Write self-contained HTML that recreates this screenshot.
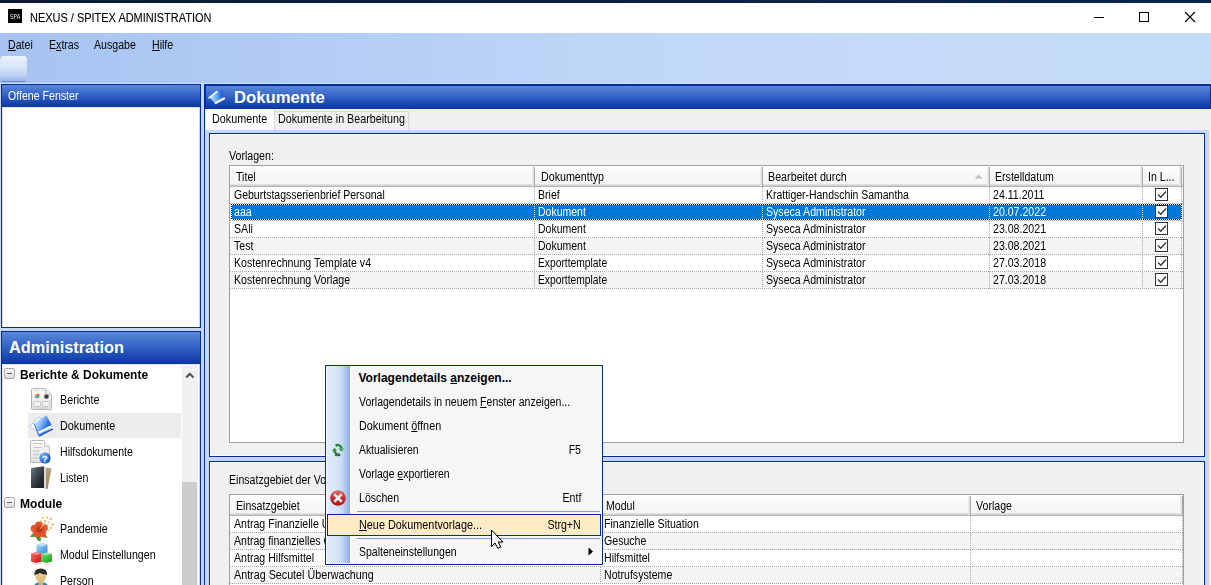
<!DOCTYPE html>
<html><head><meta charset="utf-8"><style>
*{box-sizing:border-box;margin:0;padding:0}
html,body{width:1211px;height:585px;overflow:hidden}
body{position:relative;background:#c4d8f6;font-family:"Liberation Sans",sans-serif;font-size:12px;color:#000}
.a{position:absolute}
.t{position:absolute;white-space:nowrap;line-height:13px;transform:scaleX(0.883);transform-origin:0 0}
.r{transform-origin:100% 0}
.n{transform:none}
.w{color:#fff}
.b{font-weight:bold}
.u{text-decoration:underline}
#topline{left:0;top:0;width:1211px;height:3px;background:linear-gradient(to right,#0c1b33,#0a2550)}
#titlebar{left:0;top:3px;width:1211px;height:30px;background:#fff}
#menubar{left:0;top:33px;width:1211px;height:51px;background:linear-gradient(to right,#a6c3f1 0%,#b7d0f5 35%,#c3d9f7 60%,#c4dbf7 100%)}
.hdr{background:linear-gradient(to bottom,#5a88d9 0%,#3363c6 45%,#0b35a2 100%)}
.bd{background:#062c97}
.tbl{background:#fff;border:1px solid #a0a0a0}
.th{background:linear-gradient(to bottom,#ffffff 0px,#f8f8f8 8px,#f6f6f6 18px,#e0e0e0 18px,#e0e0e0 19px,#d0d0d0 19px,#d0d0d0 20px,#b5b5b5 20px,#b5b5b5 21px)}
.sep{background:linear-gradient(to right,#eeeeee 0%,#dedede 60%,#a8a8a8 67%,#a8a8a8 100%);width:3px;border-right:0}
.row{height:17px}
.alt{background:#f5f5f5}
.sel{background:#0078d7}
.vd{border-left:1px dotted #a8a8a8}
.hd{border-bottom:1px dotted #a8a8a8}
.chk{width:13px;height:13px;border:1px solid #333;background:#fff}
</style></head><body>
<div class="a" id="topline"></div><div class="a" id="titlebar"></div><div class="a" id="menubar"></div>
<div class="a" style="left:0;top:83px;width:1211px;height:1px;background:#cfe2fb"></div>
<div class="a" style="left:8px;top:9px;width:14px;height:14px;background:#000"></div>
<div class="t w" style="left:9.8px;top:12.6px;font-size:6.8px;line-height:7px;transform:scaleX(0.78);color:#f4f4f4">SPA</div>
<div class="t " style="left:29.5px;top:12.4px;font-size:12px;transform:scaleX(0.914);color:#000;-webkit-text-stroke-width:0.1px">NEXUS / SPITEX ADMINISTRATION</div>
<div class="a" style="left:1094px;top:17px;width:10px;height:1px;background:#000"></div>
<div class="a" style="left:1139px;top:12px;width:10px;height:10px;border:1px solid #000"></div>
<svg class="a" style="left:1184px;top:11px" width="12" height="12" viewBox="0 0 12 12"><path d="M1 1L11 11M11 1L1 11" stroke="#000" stroke-width="1.1"/></svg>
<div class="t " style="left:8px;top:39.0px;"><u>D</u>atei</div>
<div class="t " style="left:49px;top:39.0px;">E<u>x</u>tras</div>
<div class="t " style="left:94px;top:39.0px;">Ausgabe</div>
<div class="t " style="left:152px;top:39.0px;"><u>H</u>ilfe</div>
<svg class="a" style="left:0px;top:55px" width="28" height="28" viewBox="0 0 28 28"><defs><linearGradient id="tb" x1="0" y1="0" x2="0" y2="1"><stop offset="0" stop-color="#eaf2fd"/><stop offset="0.45" stop-color="#d6e4f8"/><stop offset="0.8" stop-color="#b4cbef"/><stop offset="1" stop-color="#93b1e2"/></linearGradient></defs><path d="M0 4L2 1H25L27 3V25L25 27H0Z" fill="url(#tb)"/><path d="M2 26.5H25" stroke="#6584c0" stroke-width="1"/></svg>
<div class="a bd" style="left:1px;top:84px;width:200px;height:244px"></div>
<div class="a hdr" style="left:2px;top:85px;width:198px;height:22px"></div>
<div class="a" style="left:2px;top:107px;width:198px;height:220px;background:#fff;border:1px solid #e4e1dc;border-right-color:#d4d4d4;border-bottom:none"></div>
<div class="t w" style="left:7.5px;top:90.4px;">Offene Fenster</div>
<div class="a bd" style="left:1px;top:331px;width:200px;height:254px"></div>
<div class="a hdr" style="left:2px;top:332px;width:198px;height:32px"></div>
<div class="a" style="left:2px;top:364px;width:198px;height:221px;background:#fff;border:1px solid #e4e1dc;border-right-color:#d4d4d4;border-bottom:none"></div>
<div class="t w b n" style="left:9px;top:337px;font-size:16.3px;line-height:20px;letter-spacing:0">Administration</div>
<div class="a" style="left:182px;top:366px;width:16px;height:219px;background:#f0f0f0"></div>
<div class="a" style="left:182px;top:482px;width:15px;height:103px;background:#cdcdcd"></div>
<svg class="a" style="left:185px;top:371px" width="10" height="8" viewBox="0 0 10 8"><path d="M1.2 6.5L4.8 2.8L8.4 6.5" stroke="#505050" stroke-width="2" fill="none"/></svg>
<div class="a" style="left:28px;top:413px;width:153px;height:25px;background:#ececec"></div>
<div class="a" style="left:4px;top:368px;width:11px;height:11px;border:1px solid #a8a8a8;border-radius:2px;background:linear-gradient(to bottom,#fdfdfd,#dcdcdc)"></div>
<div class="a" style="left:7px;top:373px;width:5px;height:1px;background:#606060"></div>
<div class="t b" style="left:19.5px;top:369.0px;font-size:12.5px;transform:scaleX(0.955)">Berichte &amp; Dokumente</div>
<div class="a" style="left:4px;top:497px;width:11px;height:11px;border:1px solid #a8a8a8;border-radius:2px;background:linear-gradient(to bottom,#fdfdfd,#dcdcdc)"></div>
<div class="a" style="left:7px;top:502px;width:5px;height:1px;background:#606060"></div>
<div class="t b" style="left:20px;top:498.0px;font-size:12.5px;transform:scaleX(0.965)">Module</div>
<div class="t " style="left:60px;top:394.4px;transform:scaleX(0.895);">Berichte</div>
<div class="t " style="left:60px;top:420.4px;transform:scaleX(0.900);">Dokumente</div>
<div class="t " style="left:60px;top:446.4px;transform:scaleX(0.881);">Hilfsdokumente</div>
<div class="t " style="left:60px;top:472.4px;">Listen</div>
<div class="t " style="left:60px;top:523.4px;transform:scaleX(0.881);">Pandemie</div>
<div class="t " style="left:60px;top:549.4px;transform:scaleX(0.884);">Modul Einstellungen</div>
<div class="t " style="left:60px;top:575.4px;">Person</div>
<div class="a bd" style="left:204px;top:84px;width:1007px;height:501px"></div>
<div class="a hdr" style="left:206px;top:86px;width:1004px;height:23px"></div>
<div class="a" style="left:205px;top:109px;width:1006px;height:476px;background:#f0f0f0"></div>
<div class="a" style="left:205px;top:130px;width:1004px;height:455px;background:#c4d8f6;border-left:1px solid #dcdcdc;border-right:1px solid #d4d4d4"></div>
<div class="t w b n" style="left:234px;top:88px;font-size:16.7px;line-height:20px;letter-spacing:0">Dokumente</div>
<div class="a" style="left:205px;top:109px;width:70px;height:21px;background:#fff;border-right:1px solid #d9d9d9;border-left:1px solid #e8e8e8"></div>
<div class="a" style="left:274px;top:111px;width:135px;height:19px;background:#f0f0f0;border:1px solid #d9d9d9;border-bottom:none"></div>
<div class="t " style="left:212px;top:113.4px;transform:scaleX(0.900);">Dokumente</div>
<div class="t " style="left:277.5px;top:113.4px;transform:scaleX(0.893);">Dokumente in Bearbeitung</div>
<div class="a bd" style="left:209px;top:133px;width:996px;height:324px"></div>
<div class="a" style="left:210px;top:134px;width:994px;height:322px;background:#f0f0f0;border:1px solid #fbfbfb"></div>
<div class="t " style="left:229px;top:150.4px;transform:scaleX(0.884);">Vorlagen:</div>
<div class="a tbl" style="left:229px;top:165px;width:955px;height:278px"></div>
<div class="a th" style="left:230px;top:166px;width:953px;height:21px"></div>
<div class="a sep" style="left:532px;top:167px;height:19px"></div>
<div class="a sep" style="left:760px;top:167px;height:19px"></div>
<div class="a sep" style="left:987px;top:167px;height:19px"></div>
<div class="a sep" style="left:1140px;top:167px;height:19px"></div>
<div class="a sep" style="left:1179px;top:167px;height:19px"></div>
<div class="t " style="left:235.5px;top:171.0px;">Titel</div>
<div class="t " style="left:540.5px;top:171.0px;transform:scaleX(0.891);">Dokumenttyp</div>
<div class="t " style="left:768px;top:171.0px;transform:scaleX(0.894);">Bearbeitet durch</div>
<div class="t " style="left:994.5px;top:171.0px;">Erstelldatum</div>
<div class="t " style="left:1148px;top:171.0px;">In L...</div>
<svg class="a" style="left:974px;top:173px" width="9" height="6" viewBox="0 0 9 6"><path d="M0.5 5.5L4.5 1.5L8.5 5.5Z" fill="#c0c0c0"/></svg>
<div class="a row hd " style="left:230px;top:187px;width:953px"></div>
<div class="a vd" style="left:534px;top:187px;height:17px;"></div>
<div class="a vd" style="left:762px;top:187px;height:17px;"></div>
<div class="a vd" style="left:989px;top:187px;height:17px;"></div>
<div class="a vd" style="left:1142px;top:187px;height:17px;"></div>
<div class="a vd" style="left:1181px;top:187px;height:17px;"></div>
<div class="t " style="left:234px;top:189.4px;transform:scaleX(0.876);">Geburtstagsserienbrief Personal</div>
<div class="t " style="left:538px;top:189.4px;">Brief</div>
<div class="t " style="left:766px;top:189.4px;transform:scaleX(0.871);">Krattiger-Handschin Samantha</div>
<div class="t " style="left:993px;top:189.4px;">24.11.2011</div>
<div class="a chk" style="left:1155px;top:188px"></div>
<svg class="a" style="left:1157px;top:190px" width="10" height="9" viewBox="0 0 10 9"><path d="M1 4.5L3.8 7.2L9 1.5" stroke="#333" stroke-width="1.3" fill="none"/></svg>
<div class="a row hd alt" style="left:230px;top:204px;width:953px"></div>
<div class="a sel" style="left:231px;top:204px;width:951px;height:16px"></div>
<div class="a vd" style="left:534px;top:204px;height:17px;border-left-color:#d8e8f8"></div>
<div class="a vd" style="left:762px;top:204px;height:17px;border-left-color:#d8e8f8"></div>
<div class="a vd" style="left:989px;top:204px;height:17px;border-left-color:#d8e8f8"></div>
<div class="a vd" style="left:1142px;top:204px;height:17px;border-left-color:#d8e8f8"></div>
<div class="a vd" style="left:1181px;top:204px;height:17px;border-left-color:#d8e8f8"></div>
<div class="t w" style="left:234px;top:206.4px;">aaa</div>
<div class="t w" style="left:538px;top:206.4px;transform:scaleX(0.874);">Dokument</div>
<div class="t w" style="left:766px;top:206.4px;">Syseca Administrator</div>
<div class="t w" style="left:993px;top:206.4px;">20.07.2022</div>
<div class="a chk" style="left:1155px;top:205px"></div>
<svg class="a" style="left:1157px;top:207px" width="10" height="9" viewBox="0 0 10 9"><path d="M1 4.5L3.8 7.2L9 1.5" stroke="#333" stroke-width="1.3" fill="none"/></svg>
<div class="a row hd " style="left:230px;top:221px;width:953px"></div>
<div class="a vd" style="left:534px;top:221px;height:17px;"></div>
<div class="a vd" style="left:762px;top:221px;height:17px;"></div>
<div class="a vd" style="left:989px;top:221px;height:17px;"></div>
<div class="a vd" style="left:1142px;top:221px;height:17px;"></div>
<div class="a vd" style="left:1181px;top:221px;height:17px;"></div>
<div class="t " style="left:234px;top:223.4px;">SAli</div>
<div class="t " style="left:538px;top:223.4px;transform:scaleX(0.874);">Dokument</div>
<div class="t " style="left:766px;top:223.4px;">Syseca Administrator</div>
<div class="t " style="left:993px;top:223.4px;">23.08.2021</div>
<div class="a chk" style="left:1155px;top:222px"></div>
<svg class="a" style="left:1157px;top:224px" width="10" height="9" viewBox="0 0 10 9"><path d="M1 4.5L3.8 7.2L9 1.5" stroke="#333" stroke-width="1.3" fill="none"/></svg>
<div class="a row hd alt" style="left:230px;top:238px;width:953px"></div>
<div class="a vd" style="left:534px;top:238px;height:17px;"></div>
<div class="a vd" style="left:762px;top:238px;height:17px;"></div>
<div class="a vd" style="left:989px;top:238px;height:17px;"></div>
<div class="a vd" style="left:1142px;top:238px;height:17px;"></div>
<div class="a vd" style="left:1181px;top:238px;height:17px;"></div>
<div class="t " style="left:234px;top:240.4px;">Test</div>
<div class="t " style="left:538px;top:240.4px;transform:scaleX(0.874);">Dokument</div>
<div class="t " style="left:766px;top:240.4px;">Syseca Administrator</div>
<div class="t " style="left:993px;top:240.4px;">23.08.2021</div>
<div class="a chk" style="left:1155px;top:239px"></div>
<svg class="a" style="left:1157px;top:241px" width="10" height="9" viewBox="0 0 10 9"><path d="M1 4.5L3.8 7.2L9 1.5" stroke="#333" stroke-width="1.3" fill="none"/></svg>
<div class="a row hd " style="left:230px;top:255px;width:953px"></div>
<div class="a vd" style="left:534px;top:255px;height:17px;"></div>
<div class="a vd" style="left:762px;top:255px;height:17px;"></div>
<div class="a vd" style="left:989px;top:255px;height:17px;"></div>
<div class="a vd" style="left:1142px;top:255px;height:17px;"></div>
<div class="a vd" style="left:1181px;top:255px;height:17px;"></div>
<div class="t " style="left:234px;top:257.4px;">Kostenrechnung Template v4</div>
<div class="t " style="left:538px;top:257.4px;transform:scaleX(0.857);">Exporttemplate</div>
<div class="t " style="left:766px;top:257.4px;">Syseca Administrator</div>
<div class="t " style="left:993px;top:257.4px;">27.03.2018</div>
<div class="a chk" style="left:1155px;top:256px"></div>
<svg class="a" style="left:1157px;top:258px" width="10" height="9" viewBox="0 0 10 9"><path d="M1 4.5L3.8 7.2L9 1.5" stroke="#333" stroke-width="1.3" fill="none"/></svg>
<div class="a row hd alt" style="left:230px;top:272px;width:953px"></div>
<div class="a vd" style="left:534px;top:272px;height:17px;"></div>
<div class="a vd" style="left:762px;top:272px;height:17px;"></div>
<div class="a vd" style="left:989px;top:272px;height:17px;"></div>
<div class="a vd" style="left:1142px;top:272px;height:17px;"></div>
<div class="a vd" style="left:1181px;top:272px;height:17px;"></div>
<div class="t " style="left:234px;top:274.4px;">Kostenrechnung Vorlage</div>
<div class="t " style="left:538px;top:274.4px;transform:scaleX(0.857);">Exporttemplate</div>
<div class="t " style="left:766px;top:274.4px;">Syseca Administrator</div>
<div class="t " style="left:993px;top:274.4px;">27.03.2018</div>
<div class="a chk" style="left:1155px;top:273px"></div>
<svg class="a" style="left:1157px;top:275px" width="10" height="9" viewBox="0 0 10 9"><path d="M1 4.5L3.8 7.2L9 1.5" stroke="#333" stroke-width="1.3" fill="none"/></svg>
<div class="a" style="left:231px;top:204px;width:951px;height:1px;background:repeating-linear-gradient(to right,#000 0 1px,#fff 1px 2px)"></div>
<div class="a" style="left:231px;top:219px;width:951px;height:1px;background:repeating-linear-gradient(to right,#000 0 1px,#fff 1px 2px)"></div>
<div class="a" style="left:231px;top:204px;width:1px;height:16px;background:repeating-linear-gradient(to bottom,#000 0 1px,#fff 1px 2px)"></div>
<div class="a" style="left:1181px;top:204px;width:1px;height:16px;background:repeating-linear-gradient(to bottom,#000 0 1px,#fff 1px 2px)"></div>
<div class="a bd" style="left:209px;top:461px;width:996px;height:124px"></div>
<div class="a" style="left:210px;top:462px;width:994px;height:123px;background:#f0f0f0;border:1px solid #fbfbfb;border-bottom:none"></div>
<div class="t " style="left:229px;top:474.4px;">Einsatzgebiet der Vorlage:</div>
<div class="a tbl" style="left:229px;top:494px;width:955px;height:95px"></div>
<div class="a th" style="left:230px;top:495px;width:953px;height:21px"></div>
<div class="a sep" style="left:598px;top:496px;height:19px"></div>
<div class="a sep" style="left:968px;top:496px;height:19px"></div>
<div class="a sep" style="left:1180px;top:496px;height:19px"></div>
<div class="t " style="left:235.5px;top:500.4px;">Einsatzgebiet</div>
<div class="t " style="left:606px;top:500.4px;">Modul</div>
<div class="t " style="left:975.5px;top:500.4px;">Vorlage</div>
<div class="a row hd " style="left:230px;top:516px;width:953px"></div>
<div class="a vd" style="left:600px;top:516px;height:17px"></div>
<div class="a vd" style="left:970px;top:516px;height:17px"></div>
<div class="a vd" style="left:1182px;top:516px;height:17px"></div>
<div class="t " style="left:234px;top:518.4px;">Antrag Finanzielle Unterst&uuml;tzung</div>
<div class="t " style="left:604px;top:518.4px;">Finanzielle Situation</div>
<div class="a row hd alt" style="left:230px;top:533px;width:953px"></div>
<div class="a vd" style="left:600px;top:533px;height:17px"></div>
<div class="a vd" style="left:970px;top:533px;height:17px"></div>
<div class="a vd" style="left:1182px;top:533px;height:17px"></div>
<div class="t " style="left:234px;top:535.4px;">Antrag finanzielles Gesuch</div>
<div class="t " style="left:604px;top:535.4px;">Gesuche</div>
<div class="a row hd " style="left:230px;top:550px;width:953px"></div>
<div class="a vd" style="left:600px;top:550px;height:17px"></div>
<div class="a vd" style="left:970px;top:550px;height:17px"></div>
<div class="a vd" style="left:1182px;top:550px;height:17px"></div>
<div class="t " style="left:234px;top:552.4px;">Antrag Hilfsmittel</div>
<div class="t " style="left:604px;top:552.4px;">Hilfsmittel</div>
<div class="a row hd alt" style="left:230px;top:567px;width:953px"></div>
<div class="a vd" style="left:600px;top:567px;height:17px"></div>
<div class="a vd" style="left:970px;top:567px;height:17px"></div>
<div class="a vd" style="left:1182px;top:567px;height:17px"></div>
<div class="t " style="left:234px;top:569.4px;transform:scaleX(0.895);">Antrag Secutel &Uuml;berwachung</div>
<div class="t " style="left:604px;top:569.4px;">Notrufsysteme</div>
<div class="a" style="left:325px;top:365px;width:278px;height:200px;background:#f6f6f6;border:1px solid #0a2a8e"></div>
<div class="a" style="left:326px;top:366px;width:24px;height:197px;border-left:1px solid #f4f8ff;background:linear-gradient(to right,#e2edfc 0%,#d6e5fb 45%,#c6daf6 65%,#a6c0ec 85%,#88ace4 100%)"></div>
<div class="a" style="left:350px;top:366px;width:1px;height:197px;background:#fdfcf8"></div>
<div class="t b n" style="left:358.5px;top:371.9px;-webkit-text-stroke-width:0">Vorlagendetails <u>a</u>nzeigen...</div>
<div class="t " style="left:358.5px;top:395.9px;transform:scaleX(0.877);">Vorlagendetails in neuem <u>F</u>enster anzeigen...</div>
<div class="t " style="left:358.5px;top:419.9px;transform:scaleX(0.901);">Dokument <u>&ouml;</u>ffnen</div>
<div class="t " style="left:358.5px;top:443.9px;transform:scaleX(0.865);">Aktualisieren</div>
<div class="t r" style="right:630px;top:443.9px">F5</div>
<div class="t " style="left:358.5px;top:467.9px;transform:scaleX(0.871);">Vorlage <u>e</u>xportieren</div>
<div class="t " style="left:358.5px;top:491.9px;">L&ouml;schen</div>
<div class="t r" style="right:630px;top:491.9px">Entf</div>
<div class="a" style="left:357px;top:511px;width:243px;height:1px;background:#7d9dd6"></div>
<div class="a" style="left:357px;top:538px;width:243px;height:1px;background:#7d9dd6"></div>
<div class="a" style="left:327px;top:514px;width:274px;height:22px;background:#feecc4;border:1px solid #0a2a8e"></div>
<div class="t " style="left:358.5px;top:518.9px;transform:scaleX(0.904);"><u>N</u>eue Dokumentvorlage...</div>
<div class="t r" style="right:630px;top:518.9px">Strg+N</div>
<div class="t " style="left:358.5px;top:545.9px;transform:scaleX(0.876);">Spalteneinstellungen</div>
<svg class="a" style="left:588px;top:547px" width="6" height="9" viewBox="0 0 6 9"><path d="M0.5 0.5L5 4.5L0.5 8.5Z" fill="#000"/></svg>
<svg class="a" style="left:208px;top:88px" width="18" height="18" viewBox="0 0 18 18"><defs><linearGradient id="hg" x1="0" y1="0.3" x2="1" y2="0.2"><stop offset="0" stop-color="#c8ecff"/><stop offset="0.45" stop-color="#6ab0f4"/><stop offset="0.8" stop-color="#2a68e0"/><stop offset="1" stop-color="#1040b8"/></linearGradient></defs><path d="M1.2 9.3L8.5 3.6L13.4 1.6L16.2 10.4L7.4 15.6L3 11Z" fill="url(#hg)"/><path d="M1.2 9.6L8.8 3.8" stroke="#f0f6ff" stroke-width="1.8" stroke-linecap="round"/><path d="M7.6 15L16 10.4" stroke="#f4f4ff" stroke-width="2.3" stroke-linecap="round"/></svg>
<svg class="a" style="left:30px;top:387px" width="23" height="24" viewBox="0 0 23 24"><defs><linearGradient id="bg1" x1="0" y1="0" x2="0" y2="1"><stop offset="0" stop-color="#fbfbfb"/><stop offset="1" stop-color="#e2e2e2"/></linearGradient><radialGradient id="dc" cx="0.5" cy="0.5" r="0.5"><stop offset="0" stop-color="#202020"/><stop offset="0.6" stop-color="#505050"/><stop offset="1" stop-color="#b0b0b0"/></radialGradient></defs><path d="M2.5 1.5H15.5L21.5 7.5V21.5Q21.5 22.5 20.5 22.5H2.5Q1.5 22.5 1.5 21.5V2.5Q1.5 1.5 2.5 1.5Z" fill="url(#bg1)" stroke="#b4b4b4"/><path d="M15.5 1.5V7.5H21.5" fill="#ececec" stroke="#c0c0c0"/><path d="M4 3.5H9M11 3.5H14" stroke="#c8c8c8" stroke-width="0.8"/><circle cx="7" cy="9" r="2.2" fill="#f0b040"/><path d="M7 6.8A2.2 2.2 0 0 1 9.2 9H7Z" fill="#e84040"/><path d="M4.8 9A2.2 2.2 0 0 0 7 11.2V9Z" fill="#40a0e0"/><path d="M7 11.2A2.2 2.2 0 0 0 9.2 9H7Z" fill="#50c050"/><circle cx="16.5" cy="9.5" r="2.6" fill="url(#dc)"/><rect x="3.5" y="14.5" width="7" height="5" rx="1" fill="#f2f2f2" stroke="#c4c4c4"/><rect x="12.5" y="14.5" width="7" height="5" rx="1" fill="#f2f2f2" stroke="#c4c4c4"/><path d="M5 21H18" stroke="#c8c8c8" stroke-width="0.8"/></svg>
<svg class="a" style="left:28px;top:413px" width="26" height="25" viewBox="0 0 26 25"><defs><linearGradient id="fg1" x1="0" y1="0.2" x2="1" y2="0.8"><stop offset="0" stop-color="#e8f4ff"/><stop offset="0.3" stop-color="#9cc8fa"/><stop offset="0.6" stop-color="#3a80e8"/><stop offset="1" stop-color="#0a40c0"/></linearGradient></defs><path d="M1.5 13.5L10.5 4L15 7L8 18Z" fill="#f8fbff" stroke="#a8c0e8" stroke-width="0.8"/><path d="M6 10.5L18.5 2.2L24.5 14L11 23Z" fill="url(#fg1)"/><path d="M10.5 19.8L24 13.2" stroke="#f4f8ff" stroke-width="2.6"/><path d="M11 23.2L24.8 15.8" stroke="#1a50d0" stroke-width="1.4"/><path d="M6 10.5L11 23" stroke="#3a70d8" stroke-width="1"/></svg>
<svg class="a" style="left:29px;top:439px" width="23" height="26" viewBox="0 0 23 26"><defs><linearGradient id="bg2" x1="0" y1="0" x2="0" y2="1"><stop offset="0" stop-color="#fbfbfb"/><stop offset="1" stop-color="#e0e0e0"/></linearGradient><radialGradient id="qg" cx="0.35" cy="0.3" r="0.8"><stop offset="0" stop-color="#7ab8ff"/><stop offset="1" stop-color="#0a48c8"/></radialGradient></defs><path d="M2.5 1.5H14.5L20.5 7.5V23.5H1.5V2.5Q1.5 1.5 2.5 1.5Z" fill="url(#bg2)" stroke="#b8b8b8"/><path d="M15.5 1.5V7.5H20.5" fill="#eeeeee" stroke="#c4c4c4" stroke-width="0.8"/><path d="M4 4.5H13M4 8.5H12M4 12H11M4 15.5H10M4 19H9" stroke="#c4c4c4" stroke-width="1"/><circle cx="16" cy="19" r="5.6" fill="url(#qg)"/><text x="16" y="22.6" font-family="Liberation Sans" font-weight="bold" font-size="9.5" fill="#fff" text-anchor="middle">?</text></svg>
<svg class="a" style="left:30px;top:466px" width="23" height="25" viewBox="0 0 23 25"><defs><linearGradient id="lg1" x1="0" y1="0" x2="1" y2="1"><stop offset="0" stop-color="#7a8490"/><stop offset="0.3" stop-color="#4a525c"/><stop offset="0.7" stop-color="#262b32"/><stop offset="1" stop-color="#1a1e24"/></linearGradient><linearGradient id="lg2" x1="0" y1="0" x2="0" y2="1"><stop offset="0" stop-color="#b8a080"/><stop offset="1" stop-color="#a08460"/></linearGradient></defs><path d="M16 1.5L21.5 2.5L17.5 23L16 23Z" fill="url(#lg2)"/><path d="M14 0.5L16 1.2V22.8L14 22Z" fill="#d8dce4"/><path d="M1 2L14 0.2V22L1 22Z" fill="url(#lg1)"/></svg>
<svg class="a" style="left:29px;top:516px" width="26" height="26" viewBox="0 0 26 26"><defs><radialGradient id="pg" cx="0.5" cy="0.5" r="0.5"><stop offset="0" stop-color="#8a0808"/><stop offset="0.45" stop-color="#c83018" stop-opacity="0.8"/><stop offset="1" stop-color="#e25530" stop-opacity="0"/></radialGradient></defs><g fill="#f0a830"><circle cx="14" cy="2" r="0.9"/><circle cx="18" cy="1.5" r="0.9"/><circle cx="22" cy="3" r="1"/><circle cx="12" cy="5" r="0.8"/><circle cx="16" cy="5" r="0.9"/><circle cx="20" cy="6.5" r="0.8"/><circle cx="23.5" cy="8.5" r="1"/><circle cx="18.5" cy="9.5" r="0.8"/><circle cx="22" cy="12" r="0.9"/><circle cx="15" cy="8" r="0.7"/><circle cx="20" cy="14.5" r="0.8"/></g><path d="M1 21Q3 16 8 17.5L7.5 21Z" fill="#4aa830"/><path d="M7 21Q8 25 11.5 25.5Q12.5 21 10.5 19Z" fill="#3a9a20"/><path d="M12.5 19Q16 23 18.5 21.5Q17 18 14 17Z" fill="#4aa830"/><g fill="#e25530"><circle cx="10" cy="9.5" r="4"/><circle cx="15" cy="12" r="3.8"/><circle cx="13.5" cy="17.5" r="3.8"/><circle cx="7.5" cy="17.5" r="3.8"/><circle cx="5.5" cy="12.5" r="3.8"/><circle cx="10.3" cy="13.5" r="4"/></g><circle cx="10.5" cy="13.5" r="6" fill="url(#pg)" opacity="0.85"/><path d="M10.5 13.5L14 9" stroke="#f0c040" stroke-width="1"/><circle cx="14" cy="9" r="1" fill="#f0d050"/></svg>
<svg class="a" style="left:30px;top:542px" width="24" height="24" viewBox="0 0 24 24"><defs><linearGradient id="cb" x1="0" y1="0" x2="1" y2="1"><stop offset="0" stop-color="#a8d8ff"/><stop offset="1" stop-color="#3088e0"/></linearGradient><linearGradient id="cr" x1="0" y1="0" x2="1" y2="1"><stop offset="0" stop-color="#ff6a6a"/><stop offset="1" stop-color="#c81010"/></linearGradient><linearGradient id="cg" x1="0" y1="0" x2="1" y2="1"><stop offset="0" stop-color="#70e070"/><stop offset="1" stop-color="#18a018"/></linearGradient></defs><path d="M6.5 3L11.5 1L17.5 2.5V10.5L12 12L6.5 10.5Z" fill="url(#cb)"/><path d="M6.5 3L11.5 1L17.5 2.5L12 4.5Z" fill="#c8e8ff" opacity="0.8"/><path d="M1 11.5L6 10L11.5 11.5V19.5L6 21L1 19.5Z" fill="url(#cr)"/><path d="M1 11.5L6 10L11.5 11.5L6.5 13Z" fill="#ff9a9a" opacity="0.8"/><path d="M11 12L16.5 10.5L22 12V19.5L16.5 21L11 19.5Z" fill="url(#cg)"/><path d="M11 12L16.5 10.5L22 12L16.5 13.5Z" fill="#a0f0a0" opacity="0.8"/><path d="M2 21.5L6 22.5L11 21.5M12 21.5L16.5 22.5L21 21.5" stroke="#f0c0c0" stroke-width="1" opacity="0.6" fill="none"/></svg>
<svg class="a" style="left:33px;top:568px" width="16" height="17" viewBox="0 0 16 17"><defs><linearGradient id="fc" x1="0" y1="0" x2="0" y2="1"><stop offset="0" stop-color="#e8cc90"/><stop offset="1" stop-color="#d8b878"/></linearGradient></defs><path d="M1.5 17Q2 15 5.5 14.5H10.5Q14 15 14.5 17Z" fill="#1a88c8"/><path d="M5.6 12H10.2V17H5.6Z" fill="#d8b070"/><path d="M2.4 7Q2.2 14 8 14.4Q13.2 14 13.2 7Q13 3.5 8 3.5Q2.6 3.5 2.4 7Z" fill="url(#fc)"/><path d="M1.4 7.8Q0.8 0.6 7.8 0.6Q14.6 0.6 14.2 7.6Q13 6 11 6.2Q8.5 6.5 7 4.8Q5.5 6.5 2.5 6.5Q2 7 1.4 7.8Z" fill="#2c2c2c"/></svg>
<svg class="a" style="left:331px;top:443px" width="14" height="14" viewBox="0 0 14 14"><path d="M4.5 2.6Q8.5 0.6 10.6 5.2" stroke="#1f8a2a" stroke-width="2.3" fill="none"/><path d="M7.6 5.2L13 5.6L10.4 8.8Z" fill="#3aa040"/><path d="M9.2 11.4Q4.8 12.6 3.4 7.6" stroke="#1f8a2a" stroke-width="2.3" fill="none"/><path d="M0.8 8.2L6 7.8L3.6 4.4Z" fill="#2a9a30"/><path d="M4 12.4Q6.5 13.2 9 12.4" stroke="#3a3a3a" stroke-width="0.9" fill="none"/></svg>
<svg class="a" style="left:330px;top:490px" width="16" height="16" viewBox="0 0 16 16"><defs><linearGradient id="rg" x1="0" y1="0" x2="0" y2="1"><stop offset="0" stop-color="#e07070"/><stop offset="0.45" stop-color="#c43030"/><stop offset="1" stop-color="#b01818"/></linearGradient></defs><circle cx="8" cy="8" r="7.8" fill="url(#rg)"/><path d="M5.2 5.2L10.8 10.8M10.8 5.2L5.2 10.8" stroke="#f4f0f0" stroke-width="2.6" stroke-linecap="square"/></svg>
<svg class="a" style="left:490px;top:529px" width="16" height="22" viewBox="0 0 16 22"><defs><filter id="sh" x="-0.3" y="-0.3" width="1.6" height="1.6"><feGaussianBlur stdDeviation="0.9"/></filter></defs><path d="M2.5 2V18.5L6 15L8.8 20.3L11.6 19L9.2 14H13.8Z" fill="#000" opacity="0.28" filter="url(#sh)"/><path d="M1.5 1V17.5L5 14L7.8 19.3L10.6 18L8.2 13H12.8Z" fill="#fff" stroke="#000" stroke-width="1" stroke-linejoin="miter"/></svg>
</body></html>
